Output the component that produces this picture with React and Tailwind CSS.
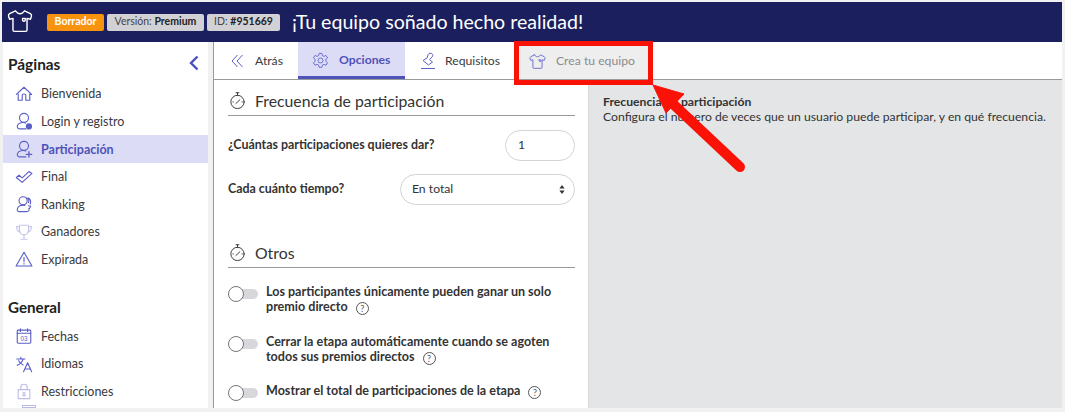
import React from "react";

const ind = "#5b5fc7";

function Ico({ children, color = ind, size = 18, opacity = 1 }) {
  return (
    <svg width={size} height={size} viewBox="0 0 20 20" fill="none" stroke={color} strokeWidth="1.25" strokeLinecap="round" strokeLinejoin="round" opacity={opacity} className="shrink-0">
      {children}
    </svg>
  );
}

const Shirt = ({ color, size = 20, sw = 1 }) => (
  <svg width={size} height={size} viewBox="0 0 20 20" fill="none" stroke={color} strokeWidth={sw} strokeLinecap="round" strokeLinejoin="round" className="shrink-0">
    <path d="M6.5 2.2 L2 4.4 C1.2 4.9 1 5.5 1.2 6.3 L2 8.6 L4.6 8 L4.6 17 C4.6 17.6 5 18 5.6 18 L14.4 18 C15 18 15.4 17.6 15.4 17 L15.4 8 L18 8.6 L18.8 6.3 C19 5.5 18.8 4.9 18 4.4 L13.5 2.2 C12.5 3.6 11.5 4.4 10 4.4 C8.5 4.4 7.5 3.6 6.5 2.2 Z" />
    <path d="M12 8 h2 v1.4 c0 .5-.5 .8-1 .8 s-1-.3-1-.8 Z" />
  </svg>
);

const User = ({ extra }) => (
  <Ico>
    <circle cx="10" cy="6.5" r="5" />
    <path d="M12 12.2 C9 11.2 3.6 11.5 2.6 15.5 C2.2 17.5 3.6 18.8 5.5 18.8 L12 18.8" />
    {extra}
  </Ico>
);

const icons = {
  home: (
    <Ico>
      <path d="M1.5 10.5 L10 2.5 L18.5 10.5 L16.5 10.5" />
      <path d="M3.6 10 L3.6 17 L8 17 L8 11.5 C8 9.5 12 9.5 12 11.5 L12 17 L16.4 17 L16.4 10" />
    </Ico>
  ),
  login: <User extra={<circle cx="15.5" cy="16" r="2.8" fill={ind} />} />,
  part: <User extra={<path d="M15.5 13 v6 M12.5 16 h6" strokeWidth="1.5" />} />,
  final: (
    <Ico>
      <path d="M1.5 10.5 L4.5 8 L8 11 L15.5 4 L18.8 6 L8 16 Z" />
    </Ico>
  ),
  rank: (
    <Ico>
      <circle cx="9" cy="6.5" r="4.5" />
      <path d="M12.5 3.5 C15 3.5 16 6 15 8.5 M14.5 3.5 C17 4 18 7 17 10" />
      <path d="M11 11.5 C7 10.5 3 12.5 2.5 16 C2.3 17.5 3.4 18.5 5 18.5 L13 18.5 C15 18.5 16 17 15.5 15" />
      <path d="M15 12 L17.5 12.5 L16 15" />
    </Ico>
  ),
  trophy: (
    <Ico opacity={0.35}>
      <path d="M5 2.5 h10 v6 c0 2.6-2.2 4.5-5 4.5 s-5-1.9-5-4.5 Z" />
      <path d="M5 4 H1.8 c0 3.4 1.2 5.4 3.8 5.8 M15 4 h3.2 c0 3.4-1.2 5.4-3.8 5.8" />
      <path d="M10 13 v4 M6.5 18 h7" />
    </Ico>
  ),
  warn: (
    <Ico>
      <path d="M10 2.5 L18.8 17.8 H1.2 Z" />
      <path d="M10 8 v5 M10 15.2 v.3" />
    </Ico>
  ),
  cal: (
    <Ico>
      <rect x="2.5" y="3.5" width="15" height="14.5" rx="1" />
      <path d="M2.5 7 h15 M6 2 v3 M14 2 v3" />
      <text x="10" y="15.5" fontSize="7" textAnchor="middle" fill={ind} stroke="none" fontFamily="Liberation Sans">03</text>
    </Ico>
  ),
  lang: (
    <Ico>
      <path d="M2 4.5 h9 M6.5 2.5 v2 M9 4.5 C8 8 5.5 10 2.5 11.5 M4 6.5 C5 8.5 7 10 9 11" />
      <path d="M9.5 18.5 L14 8.5 L18.5 18.5 M11 15.5 h6" />
    </Ico>
  ),
  lock: (
    <Ico opacity={0.4}>
      <rect x="3.5" y="8.5" width="13" height="10" />
      <path d="M6.5 8.5 V5.5 C6.5 1.5 13.5 1.5 13.5 5.5 V8.5" />
      <rect x="9" y="12" width="2" height="3.4" />
    </Ico>
  ),
};

const pages = [
  ["home", "Bienvenida"],
  ["login", "Login y registro"],
  ["part", "Participación", true],
  ["final", "Final"],
  ["rank", "Ranking"],
  ["trophy", "Ganadores"],
  ["warn", "Expirada"],
];
const general = [
  ["cal", "Fechas"],
  ["lang", "Idiomas"],
  ["lock", "Restricciones"],
];

function Row({ icon, label, active }) {
  return (
    <div className={`flex h-[27.6px] items-center text-[12.5px] ${active ? "bg-[#dcdcf6] font-bold text-[#4f53b8]" : "text-[#3a3a40]"}`}>
      <span className="flex w-[38px] shrink-0 pl-[12px]">{icons[icon]}</span>
      <span className="translate-y-[0.5px]">{label}</span>
    </div>
  );
}

const Gauge = () => (
  <svg width="17" height="19" viewBox="0 0 17 20" fill="none" stroke="#333" strokeWidth="1" strokeLinecap="round" className="shrink-0">
    <circle cx="8.5" cy="11.5" r="7" />
    <path d="M7 1.8 h3 M8.5 2 v2.5" />
    <path d="M6.8 13.2 L11 9.2" />
    <path d="M3.5 11.5 h1 M13 11.5 h1" strokeWidth="0.7" />
  </svg>
);

function Heading({ text, className = "" }) {
  return (
    <div className={`flex h-[30px] items-center gap-[9px] border-b border-[#9a9a9a] pl-[1px] text-[15.8px] text-[#333] ${className}`}>
      <Gauge />
      <span>{text}</span>
    </div>
  );
}

const Help = () => (
  <span className="ml-[8px] inline-flex h-[13px] w-[13px] translate-y-[1px] items-center justify-center rounded-full border border-[#555] text-[9px] font-normal leading-none text-[#555]">?</span>
);

function Toggle({ children, className = "" }) {
  return (
    <div className={`flex items-start text-[12.55px] font-bold leading-[15px] text-[#333] ${className}`}>
      <div className="relative mr-[8px] mt-[2px] h-[16px] w-[30px] shrink-0">
        <div className="absolute right-0 top-[3px] h-[10px] w-[26px] rounded-full bg-[#d8d8dc]" />
        <div className="absolute left-0 top-0 h-[16px] w-[16px] rounded-full border border-[#777] bg-white" />
      </div>
      <div>{children}</div>
    </div>
  );
}

function Tab({ icon, label, active, className = "" }) {
  return (
    <div className={`flex h-full items-center text-[12.2px] ${active ? "border-b-[3px] border-[#4f53b8] bg-[#dcdcf6] pt-[3px] font-bold text-[#4f53b8]" : "pt-[1px] text-[#3a3a40]"} ${className}`}>
      {icon}
      {label}
    </div>
  );
}

export default function App() {
  return (
    <div className="relative flex h-[412px] w-[1065px] flex-col overflow-hidden bg-[#f1f1f2] pt-[2px] font-['Lato','Noto_Sans',sans-serif]">
      <header className="ml-[2px] mr-[3px] flex h-[40px] shrink-0 items-center bg-[#1b1f5e] pl-[5px]">
        <span className="-translate-y-[1px]"><Shirt color="#fff" size={26} sw={1.1} /></span>
        <div className="ml-[14px] flex items-center gap-[3px] text-[10.5px]">
          <span className="flex h-[17px] w-[57px] items-center justify-center rounded-[2px] bg-[#f7930e] font-bold text-white">Borrador</span>
          <span className="flex h-[17px] w-[97px] items-center justify-center rounded-[2px] bg-[#d2d2d6] text-[#444]">Versión:&nbsp;<b className="font-bold text-[#222]">Premium</b></span>
          <span className="flex h-[17px] w-[73px] items-center justify-center rounded-[2px] bg-[#d2d2d6] text-[#444]">ID:&nbsp;<b className="font-bold text-[#222]">#951669</b></span>
        </div>
        <h1 className="ml-[12px] text-[19.6px] leading-none text-white">¡Tu equipo soñado hecho realidad!</h1>
      </header>

      <div className="flex min-h-0 flex-1 pb-[4px] pl-[3px] pr-[3px]">
        <aside className="w-[205px] shrink-0 overflow-hidden bg-white">
          <div className="flex h-[38px] items-start justify-between pl-[5px] pr-[9px] pt-[11px]">
            <span className="text-[15.4px] font-bold leading-[22px] text-[#222]">Páginas</span>
            <svg width="10" height="16" viewBox="0 0 10 16" fill="none" stroke="#4a4fc0" strokeWidth="2.4" className="mt-[2px]"><path d="M8.5 1.5 L2 8 L8.5 14.5" /></svg>
          </div>
          {pages.map(([i, l, a]) => <Row key={l} icon={i} label={l} active={a} />)}
          <div className="mt-[22px] flex h-[24px] items-center pl-[5px] text-[15.2px] font-bold leading-[22px] text-[#222]">General</div>
          <div className="h-[3px]" />
          {general.map(([i, l]) => <Row key={l} icon={i} label={l} />)}
          <div className="pl-[19px]"><span className="block h-[3px] w-[14px] border border-[#b9b9e6]" /></div>
        </aside>

        <main className="ml-[5px] flex min-w-0 flex-1 flex-col border-l border-[#9a9a9a] bg-white">
          <nav className="flex h-[38px] shrink-0 items-center border-b border-[#9a9a9a]">
            <Tab className="w-[84px] pl-[17px]" label="Atrás" icon={
              <svg width="13" height="14" viewBox="0 0 13 14" fill="none" stroke={ind} className="mr-[11px]"><path d="M6.5 1 L1 7 L6.5 13 M11.5 1 L6 7 L11.5 13" /></svg>
            } />
            <Tab active className="w-[107px] pl-[14px]" label="Opciones" icon={
              <svg width="17" height="17" viewBox="0 0 24 24" fill="none" stroke={ind} strokeWidth="1.2" className="mr-[10px]"><circle cx="12" cy="12" r="3.5" /><path d="M10 2 h4 l.6 3 2.4 1.2 2.7-1.4 2.3 3.6-2.4 2 v2.8 l2.4 2-2.3 3.6-2.7-1.4-2.4 1.2-.6 3 h-4 l-.6-3-2.4-1.2-2.7 1.4-2.3-3.6 2.4-2 v-2.8 l-2.4-2 2.3-3.6 2.7 1.4 2.4-1.2 Z" /></svg>
            } />
            <Tab className="w-[109px] pl-[15px]" label="Requisitos" icon={
              <svg width="17" height="18" viewBox="0 0 17 18" fill="none" stroke={ind} className="mr-[8px]"><path d="M9 1.5 C12 0.5 14 3 12 5 L9.5 7.5 L12.5 10 L8.5 13 L3 8.5 L7 6 C8 5 7 3 9 1.5 Z" /><path d="M1 16.5 H15" /></svg>
            } />
            <div className="flex h-full w-[139px] items-center bg-[#eeeeee] pl-[15px] pt-[1px] text-[12.2px] text-[#8b8b8f]">
              <span className="mr-[10px]"><Shirt color={ind} size={17} /></span>
              Crea tu equipo
            </div>
          </nav>
          <div className="flex min-h-0 flex-1">
            <section className="w-[375px] shrink-0 overflow-hidden border-r border-[#d8d8d8] pl-[14px] pr-[13px] pt-[6px]">
              <Heading text="Frecuencia de participación" />
              <div className="mt-[14px] flex items-center justify-between text-[12.4px] font-bold text-[#333]">
                <span>¿Cuántas participaciones quieres dar?</span>
                <div className="flex h-[31px] w-[70px] items-center rounded-[16px] border border-[#d3d3d3] pl-[12px] text-[12.2px] font-normal">1</div>
              </div>
              <div className="mt-[13px] flex items-center justify-between text-[12.4px] font-bold text-[#333]">
                <span>Cada cuánto tiempo?</span>
                <div className="flex h-[31px] w-[175px] items-center justify-between rounded-[16px] border border-[#d3d3d3] pl-[11px] pr-[9px] text-[12.2px] font-normal">
                  En total
                  <svg width="6" height="9" viewBox="0 0 6 9" fill="#333"><path d="M3 0 L5.6 3.4 H.4 Z M3 9 L.4 5.6 H5.6 Z" /></svg>
                </div>
              </div>
              <Heading text="Otros" className="mt-[33px]" />
              <Toggle className="mt-[16px]">Los participantes únicamente pueden ganar un solo<br />premio directo<Help /></Toggle>
              <Toggle className="mt-[20px]">Cerrar la etapa automáticamente cuando se agoten<br />todos sus premios directos<Help /></Toggle>
              <Toggle className="mt-[19px]">Mostrar el total de participaciones de la etapa<Help /></Toggle>
            </section>
            <aside className="flex-1 bg-[#e4e5e7] pl-[14px] pt-[14px] text-[12.2px] leading-[15px] text-[#333]">
              <div className="font-bold">Frecuencia de participación</div>
              <div>Configura el número de veces que un usuario puede participar, y en qué frecuencia.</div>
            </aside>
          </div>
        </main>
      </div>

      <div className="absolute left-[514px] top-[41px] h-[44px] w-[139px] border-[5px] border-[#fb1207]" />
      <svg className="absolute left-[650px] top-[80px]" width="105" height="100" viewBox="0 0 105 100" fill="none">
        <path d="M3 5 L34 14 L16 33 Z" fill="#fb1207" stroke="#fb1207" strokeLinejoin="round" />
        <path d="M22 23 L90 87" stroke="#fb1207" strokeWidth="10" strokeLinecap="round" />
      </svg>
    </div>
  );
}
